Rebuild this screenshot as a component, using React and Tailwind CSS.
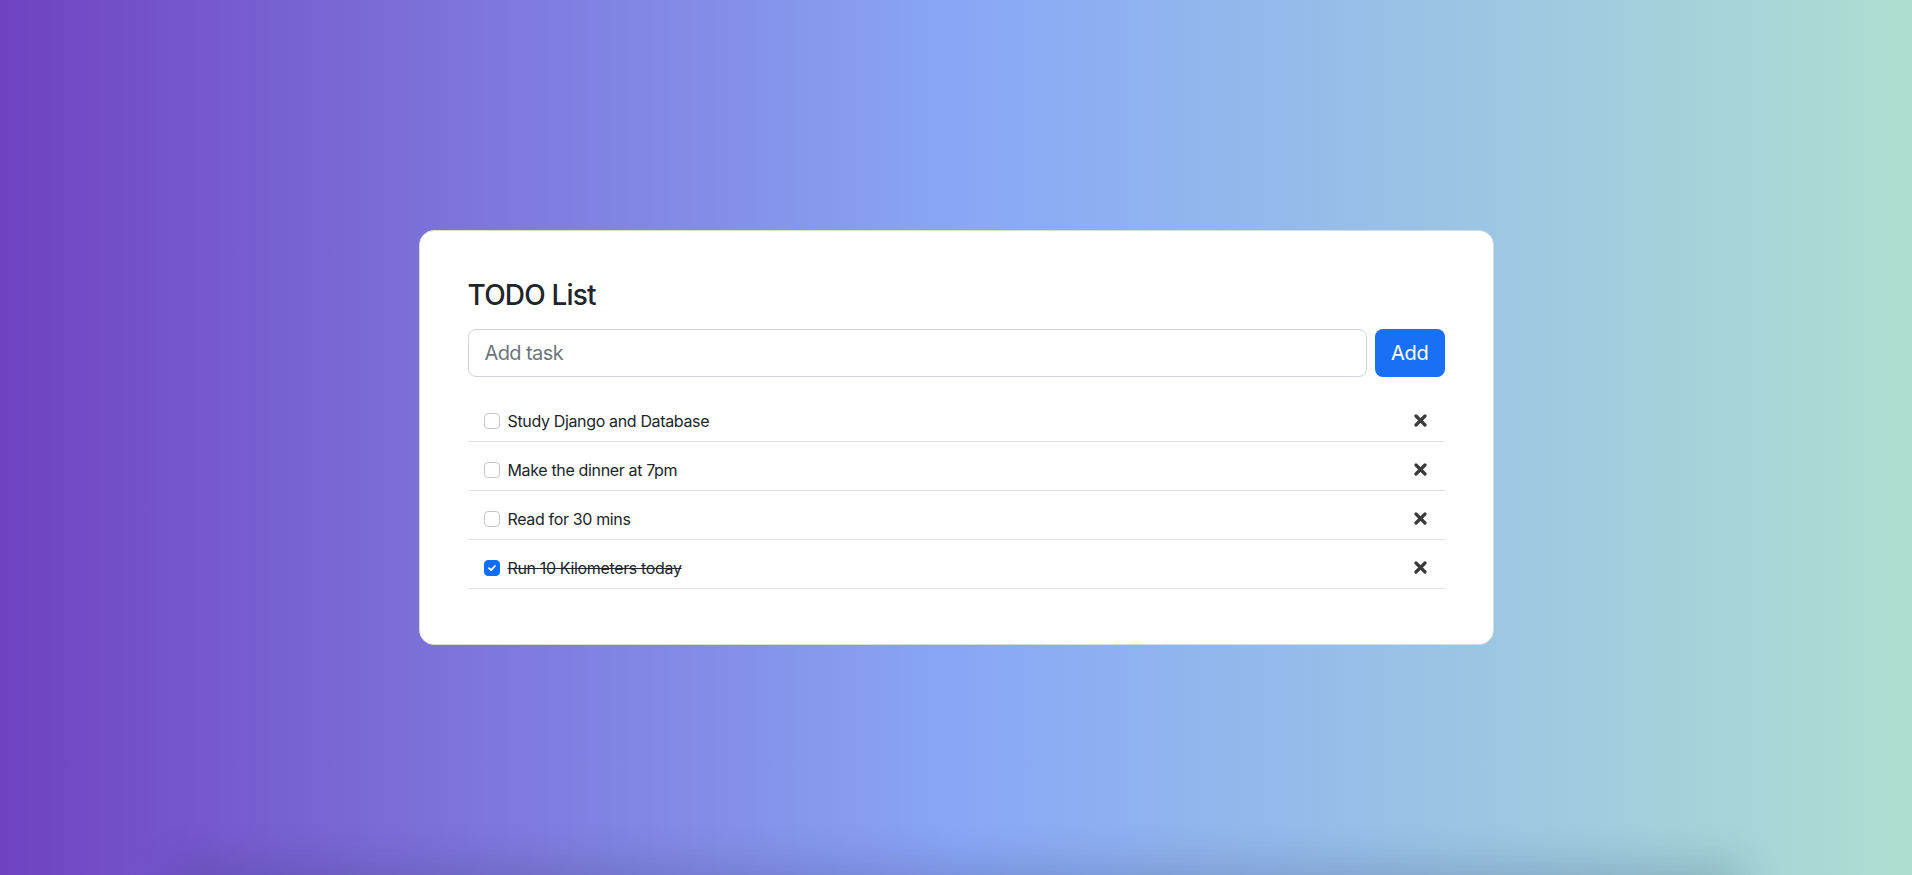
import { useState } from "react";

const initialTasks = [
  { id: 1, text: "Study Django and Database", done: false },
  { id: 2, text: "Make the dinner at 7pm", done: false },
  { id: 3, text: "Read for 30 mins", done: false },
  { id: 4, text: "Run 10 Kilometers today", done: true },
];

function XIcon() {
  return (
    <svg width="13" height="13" viewBox="0 0 13 13" fill="none">
      <path d="M2 2L11 11M11 2L2 11" stroke="#3b3b3b" strokeWidth="3.2" strokeLinecap="round" />
    </svg>
  );
}

function Check({ checked, onChange }) {
  return (
    <button
      onClick={onChange}
      className={`w-4 h-4 shrink-0 rounded-[4px] border flex items-center justify-center ${
        checked ? "bg-[#0d6efd] border-[#0d6efd]" : "bg-white border-[#c4c8cc]"
      }`}
    >
      {checked && (
        <svg width="10" height="10" viewBox="0 0 10 10" fill="none">
          <path d="M2 5.2L4.1 7.2L8 3" stroke="white" strokeWidth="1.8" strokeLinecap="round" strokeLinejoin="round" />
        </svg>
      )}
    </button>
  );
}

export default function App() {
  const [tasks, setTasks] = useState(initialTasks);
  const [text, setText] = useState("");

  const addTask = () => {
    if (!text.trim()) return;
    setTasks([...tasks, { id: Date.now(), text: text.trim(), done: false }]);
    setText("");
  };

  return (
    <div
      className="relative min-h-screen overflow-hidden flex items-center justify-center bg-gradient-to-r from-[#6f42c1] via-[#89a6f6] to-[#acdfd0]"
      style={{ fontFamily: "Inter, 'Noto Sans', sans-serif" }}
    >
      {/* card */}
      <div className="w-[1075px] bg-white border border-[#d9dce0] rounded-[15px] px-12 pt-12 pb-[55px]">
        <h3 className="text-[28px] leading-[1.2] font-medium tracking-[-0.8px] text-[#212529] mb-4">TODO List</h3>

        <div className="flex gap-2">
          <input
            value={text}
            onChange={(e) => setText(e.target.value)}
            placeholder="Add task"
            className="flex-1 h-12 rounded-lg border border-[#ced4da] px-4 text-xl tracking-[-0.6px] text-[#212529] placeholder:text-[#6c757d] outline-none"
          />
          <button
            onClick={addTask}
            className="h-12 px-4 rounded-lg bg-[#1a6ff5] text-white text-xl tracking-[-0.3px]"
          >
            Add
          </button>
        </div>

        <ul className="mt-4">
          {tasks.map((t) => (
            <li
              key={t.id}
              className="h-[49px] flex items-center justify-between px-4 pt-2 border-b border-[#dee2e6]"
            >
              <div className="flex items-center gap-2">
                <Check
                  checked={t.done}
                  onChange={() =>
                    setTasks(tasks.map((x) => (x.id === t.id ? { ...x, done: !x.done } : x)))
                  }
                />
                <span className={`text-base tracking-[-0.35px] text-[#212529] ${t.done ? "line-through" : ""}`}>
                  {t.text}
                </span>
              </div>
              <button
                onClick={() => setTasks(tasks.filter((x) => x.id !== t.id))}
                className="mr-[2px]"
              >
                <XIcon />
              </button>
            </li>
          ))}
        </ul>
      </div>

      {/* faint shadow at the bottom edge */}
      <div className="absolute left-[183px] right-[181px] bottom-[-40px] h-[40px] shadow-[0_0_40px_12px_rgba(40,40,90,0.18)]" />
    </div>
  );
}
